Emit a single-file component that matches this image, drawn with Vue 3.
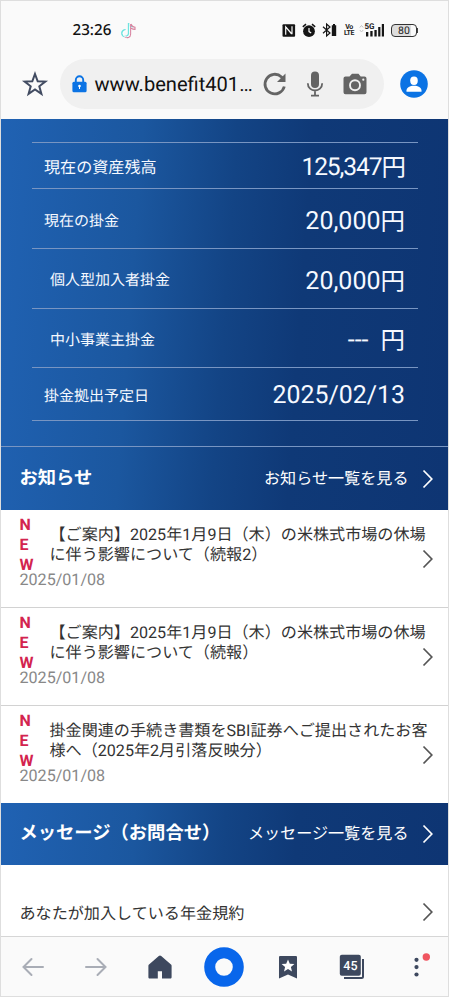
<template>
  <div class="screen">
    <header class="top">
      <div class="status">
        <span class="clock">23:26</span>
        <svg class="tiktok" width="15" height="17" viewBox="0 0 15 17" fill="none" stroke-width="1.5">
          <path d="M7.6 1v10.2a3.4 3.4 0 1 1-3-3.4M7.6 1c.4 2.4 2 3.6 4.2 3.8" stroke="#6fe3df" />
          <path d="M9.6 2v10.2a3.4 3.4 0 0 1-6 2.2M10 2c.6 2 1.8 3 4 3.2v2.2c-1.6 0-2.8-.5-4-1.2" stroke="#d8829f" stroke-width="1.1" />
          <path d="M8.6 2v9.7a3.2 3.2 0 1 1-3-3.2" stroke="#fff" stroke-width=".8" />
        </svg>
        <div class="indicators">
          <svg class="nfc" width="14" height="13" viewBox="0 0 14 13">
            <rect x=".5" y=".3" width="12.6" height="12.4" rx="1" fill="#151515" />
            <path d="M3.7 10.8V2.800l5.800 7M10 2.200v8M4.200 3.300l5.600 6.500" fill="none" stroke="#fafafa" stroke-width="1.2" />
          </svg>
          <svg class="alarm" width="14" height="15" viewBox="0 0 14 15">
            <circle cx="7" cy="8.2" r="5.9" fill="#151515" />
            <path d="M.8 3.8 4 1.2M13.2 3.8 10 1.2" stroke="#151515" stroke-width="1.5" />
            <path d="M7 5v3.6l2.200 1.500" fill="none" stroke="#fafafa" stroke-width="1.2" />
          </svg>
          <svg class="bluetooth" width="15" height="14" viewBox="0 0 15 14">
            <path d="M1 3.8 8 10 4.600 13V1L8 4 1 10.2" fill="none" stroke="#151515" stroke-width="1.2" />
            <path d="M9.800 2.200h1.200V1h2v1.200h1.200V13H9.800z" fill="#151515" />
          </svg>
          <span class="volte"><b>Vo</b><b>LTE</b></span>
          <svg class="signal" width="26" height="16" viewBox="0 0 26 16">
            <path d="M.8 5.500 2.500 3.500l1.700 2M.8 8l1.700 2 1.700-2" fill="none" stroke="#c4c4c4" />
            <text x="5.500" y="7.300" class="five-g">5G</text>
            <path d="M7 10h2.300v4.500H7zM11.300 9h2.300v5.500h-2.300zM15.400 8h2.300v6.500h-2.300zM19.200 5h2.200v9.500h-2.200zM22.800 2h2.200v12.500h-2.200z" fill="#151515" />
          </svg>
          <span class="battery">80</span>
        </div>
      </div>

      <div class="address-row">
        <svg class="star" width="24" height="24" viewBox="0 0 24 24">
          <path d="m12 2 2.700 7.300 7.600.3-6 4.700 2.100 7.500L12 17.500l-6.400 4.300 2.100-7.500-6-4.700 7.600-.3z" fill="none" stroke="#414b61" stroke-width="2" />
        </svg>
        <div class="address">
          <svg class="lock" width="15" height="18" viewBox="0 0 15 18">
            <path d="M3.800 8V5a3.700 3.700 0 0 1 7.400 0v3" fill="none" stroke="#0b73e4" stroke-width="1.9" />
            <rect x=".4" y="6.700" width="14.200" height="10.600" rx="1.500" fill="#0b73e4" />
            <circle cx="7.500" cy="11" r="1.300" fill="#fff" />
            <path d="M7 11.500h1V14H7z" fill="#fff" />
          </svg>
          <span class="url">www.benefit401…</span>
          <svg class="reload" width="26" height="26" viewBox="0 0 26 26">
            <path d="M22.300 15.500A9.800 9.800 0 1 1 19.500 5.900l2.500 2.500" fill="none" stroke="#646464" stroke-width="2.800" />
            <path d="M23.500 2.500V11H15z" fill="#646464" />
          </svg>
          <svg class="mic" width="18" height="26" viewBox="0 0 18 26">
            <rect x="5" y=".6" width="8" height="16.400" rx="4" fill="#646464" />
            <path d="M1.800 12.300c0 9.600 14.400 9.600 14.400 0M9 19.500v5M5 24.700h8" fill="none" stroke="#646464" stroke-width="1.800" />
          </svg>
          <svg class="camera" width="24" height="22" viewBox="0 0 24 22">
            <path d="M2.500 3.500h4L9 .8h6.500l2.200 2.700h3.800a2 2 0 0 1 2 2v13.800a2 2 0 0 1-2 2h-19a2 2 0 0 1-2-2V5.500a2 2 0 0 1 2-2z" fill="#646464" />
            <circle cx="12" cy="12.200" r="5" fill="none" stroke="#f0f0f0" stroke-width="1.900" />
            <circle cx="20.300" cy="6.700" r="1.100" fill="#f0f0f0" />
          </svg>
        </div>
        <svg class="avatar" width="28" height="28" viewBox="0 0 28 28">
          <circle cx="14" cy="14" r="13.800" fill="#0b73e4" />
          <ellipse cx="14" cy="10.800" rx="3.800" ry="4.200" fill="#fff" />
          <path d="M6.500 21.800v-1.300c0-3 3.500-4.800 7.500-4.800s7.500 1.800 7.500 4.800v1.300z" fill="#fff" />
        </svg>
      </div>
    </header>

    <main class="page">
      <section class="summary">
        <dl class="assets">
          <div v-for="row in assets" :key="row.label" :class="['asset', row.kind]">
            <dt>{{ row.label }}</dt>
            <dd><span class="amount">{{ row.value }}</span><span v-if="row.unit" class="unit">{{ row.unit }}</span></dd>
          </div>
        </dl>
        <div class="section-head">
          <h2>お知らせ</h2>
          <a>お知らせ一覧を見る</a>
          <svg class="chevron" width="12" height="20" viewBox="0 0 12 20"><path d="m1.500 1.500 8.300 8.500-8.300 8.500" /></svg>
        </div>
      </section>

      <article v-for="item in news" :key="item.id" class="news">
        <div class="news-main">
          <div class="new-mark">
            <span>N</span>
            <span>E</span>
            <span>W</span>
          </div>
          <p>{{ item.lines[0] }}<br>{{ item.lines[1] }}</p>
          <svg class="chevron" width="12" height="20" viewBox="0 0 12 20"><path d="m1.500 1.500 8.300 8.500-8.300 8.500" /></svg>
        </div>
        <time>2025/01/08</time>
      </article>

      <div class="section-head message">
        <h2>メッセージ（お問合せ）</h2>
        <a>メッセージ一覧を見る</a>
        <svg class="chevron" width="12" height="20" viewBox="0 0 12 20"><path d="m1.500 1.500 8.300 8.500-8.300 8.500" /></svg>
      </div>

      <div class="rules">
        <span>あなたが加入している年金規約</span>
        <svg class="chevron" width="12" height="20" viewBox="0 0 12 20"><path d="m1.500 1.500 8.300 8.500-8.300 8.500" /></svg>
      </div>
    </main>

    <nav class="toolbar">
      <svg width="24" height="20" viewBox="0 0 24 20">
        <path d="M22 10H2.500M10.500 2 2.500 10l8 8" fill="none" stroke="#a9adb6" stroke-width="2" stroke-linecap="round" />
      </svg>
      <svg width="24" height="20" viewBox="0 0 24 20">
        <path d="M2 10h19.500M13.500 2l8 8-8 8" fill="none" stroke="#a9adb6" stroke-width="2" stroke-linecap="round" />
      </svg>
      <svg width="24" height="24" viewBox="0 0 24 24">
        <path d="M10.800 1.100a1.800 1.800 0 0 1 2.400 0l9.800 8.300c.4.400.6.800.6 1.300v11.500c0 .8-.6 1.400-1.400 1.400h-8.200v-7.300H9.800v7.300h-8c-.8 0-1.400-.6-1.400-1.400V10.700c0-.5.2-.9.600-1.300z" fill="#3d485e" />
      </svg>
      <svg width="40" height="40" viewBox="0 0 40 40">
        <circle cx="20" cy="20" r="14.300" fill="none" stroke="#0866eb" stroke-width="11" />
      </svg>
      <svg width="20" height="24" viewBox="0 0 20 24">
        <path d="M1 2.300C1 1.500 1.500 1 2.300 1h15.400c.8 0 1.300.5 1.300 1.300v21.200l-9-4-9 4z" fill="#3d485e" />
        <path d="m10 4.500 1.800 4.200 4.600.3-3.500 3 1.100 4.500-4-2.500-4 2.500 1.100-4.500-3.500-3 4.600-.3z" fill="#fff" />
      </svg>
      <svg width="26" height="26" viewBox="0 0 26 26">
        <path d="M24 5v17.500a1.500 1.500 0 0 1-1.500 1.500H5" fill="none" stroke="#3d485e" stroke-width="2" />
        <rect x=".8" y=".8" width="21" height="21" rx="2" fill="#3d485e" />
        <text x="11.400" y="15.700" class="tab-count">45</text>
      </svg>
      <svg width="24" height="30" viewBox="0 0 24 30">
        <g fill="#3d485e">
          <circle cx="12.500" cy="7.800" r="2.100" />
          <circle cx="12.500" cy="15.100" r="2.100" />
          <circle cx="12.500" cy="22.500" r="2.100" />
        </g>
        <circle cx="22.300" cy="5" r="3.700" fill="#f05560" class="dot" />
      </svg>
    </nav>
  </div>
</template>

<script setup>
const assets = [
  { label: '現在の資産残高', value: '125,347', unit: '円', kind: 'total' },
  { label: '現在の掛金', value: '20,000', unit: '円', kind: 'current' },
  { label: '個人型加入者掛金', value: '20,000', unit: '円', kind: 'sub' },
  { label: '中小事業主掛金', value: '---', unit: '円', kind: 'sub none' },
  { label: '掛金拠出予定日', value: '2025/02/13', unit: '', kind: 'date' },
]

const news = [
  { id: 1, lines: ['【ご案内】2025年1月9日（木）の米株式市場の休場', 'に伴う影響について（続報2）'] },
  { id: 2, lines: ['【ご案内】2025年1月9日（木）の米株式市場の休場', 'に伴う影響について（続報）'] },
  { id: 3, lines: ['掛金関連の手続き書類をSBI証券へご提出されたお客', '様へ（2025年2月引落反映分）'] },
]
</script>

<style>
body {
  background: #fff;
}
</style>

<style scoped>
.screen {
  box-sizing: border-box;
  width: 449px;
  height: 997px;
  overflow: hidden;
  display: flex;
  flex-direction: column;
  border: 1px solid #dedede;
  background: #fff;
  color: #333;
  font-family: Roboto, 'Noto Sans CJK JP', sans-serif;
  text-rendering: geometricPrecision;
}

svg {
  display: block;
  flex: none;
  overflow: visible;
}

.top {
  flex: none;
  height: 118px;
  background: #fafafa;
}

.status {
  height: 58px;
  display: flex;
  align-items: center;
  padding-left: 71.5px;
}

.clock {
  width: 48.5px;
  font-family: 'Noto Sans', sans-serif;
  font-size: 15.2px;
  font-weight: 500;
  line-height: 20px;
  color: #111;
}

.indicators {
  display: flex;
  align-items: center;
  margin-left: 146px;
}

.alarm {
  margin-left: 6px;
}

.bluetooth {
  margin-left: 6px;
}

.volte {
  display: flex;
  flex-direction: column;
  align-items: center;
  width: 10px;
  margin-left: 7px;
  font-size: 7px;
  line-height: 6.5px;
  letter-spacing: -0.5px;
  color: #222;
}

.signal {
  margin-left: 5px;
}

.five-g {
  font-size: 8px;
  font-weight: bold;
  fill: #222;
}

.battery {
  position: relative;
  box-sizing: border-box;
  width: 26px;
  height: 13px;
  margin-left: 6px;
  border: 1px solid #333;
  border-radius: 4px;
  background: linear-gradient(to right, #ddd 80%, #fafafa 80%);
  font-size: 10.5px;
  line-height: 11px;
  text-align: center;
  color: #222;
}

.battery::after {
  content: '';
  position: absolute;
  right: -2px;
  top: 3px;
  width: 1px;
  height: 5px;
  background: #444;
}

.address-row {
  display: flex;
  align-items: center;
  padding-left: 22px;
}

.address {
  box-sizing: border-box;
  display: flex;
  align-items: center;
  width: 324px;
  height: 50px;
  margin-left: 13px;
  padding-left: 12px;
  border-radius: 25px;
  background: #f0f0f0;
}

.url {
  width: 167px;
  margin-left: 7.5px;
  font-size: 20.1px;
  line-height: 26px;
  white-space: nowrap;
  color: #111;
}

.mic {
  margin-left: 18px;
}

.camera {
  margin-left: 19px;
}

.avatar {
  margin-left: 16px;
}

.page {
  flex: 1;
  min-height: 0;
  overflow: hidden;
}

.summary,
.message {
  background: linear-gradient(94deg, #2062b3 0%, #1b579f 30%, #134485 50%, #0f3977 66%, #0e3573 100%);
}

.summary {
  height: 391px;
}

.assets {
  height: 279px;
  margin: 0 30px 0 31px;
  padding-top: 23px;
}

.asset {
  box-sizing: border-box;
  height: 60px;
  display: flex;
  align-items: center;
  justify-content: space-between;
  padding: 4px 13px 0 12px;
  border-bottom: 1px solid #7895c2;
  color: #f6f9ff;
}

.asset dt {
  font-size: 15px;
  line-height: 20px;
}

.asset dd {
  display: flex;
  align-items: center;
  margin: 3px 0 0;
  font-size: 25px;
  line-height: 30px;
}

.unit {
  font-size: 24.5px;
}

.total {
  height: 47px;
  border-top: 1px solid #7895c2;
}

.total dt {
  font-size: 16.1px;
}

.total .amount {
  font-size: 24.6px;
  letter-spacing: -1.1px;
}

.total dd {
  margin: 1px -1px 0 0;
}

.sub {
  height: 59.5px;
  padding-left: 18px;
}

.none .amount {
  margin-right: 12px;
}

.date {
  height: 53px;
}

.date dd {
  margin-top: 0;
  font-size: 24.9px;
}

.section-head {
  box-sizing: border-box;
  display: flex;
  align-items: center;
  height: 64px;
  padding: 0 14.5px 0 18.5px;
  border-top: 1px solid #7895c2;
  color: #fff;
}

.summary .section-head {
  margin-top: 25px;
}

.section-head h2 {
  flex: 1;
  margin: 0;
  font-size: 18.3px;
  line-height: 24px;
}

.section-head a {
  font-size: 16.1px;
  line-height: 22px;
}

.section-head .chevron {
  margin-left: 13px;
  stroke: #fff;
}

.chevron {
  fill: none;
  stroke: #555;
  stroke-width: 1.7;
}

.news {
  box-sizing: border-box;
  height: 98px;
  padding: 8px 14.5px 0 18.5px;
  border-bottom: 1px solid #d2d2d2;
}

.news:nth-of-type(3) {
  height: 97px;
  border-bottom: 0;
}

.news-main {
  display: flex;
  align-items: flex-start;
  height: 55px;
}

.new-mark {
  flex: none;
  display: flex;
  flex-direction: column;
  gap: 6.2px;
  width: 30px;
  font-size: 16px;
  font-weight: 700;
  line-height: 14px;
  color: #d3244f;
}

.news p {
  flex: 1;
  min-width: 0;
  margin: 7px 0 0;
  font-size: 16.1px;
  line-height: 20.4px;
  white-space: nowrap;
}

.news .chevron {
  margin-top: 31px;
}

.news time {
  display: block;
  font-size: 16.1px;
  line-height: 14px;
  color: #888;
}

.message {
  height: 62px;
  border-top: 0;
}

.rules {
  display: flex;
  align-items: center;
  justify-content: space-between;
  height: 94px;
  padding: 0 14.5px 0 18.5px;
  font-size: 16.1px;
}

.toolbar {
  box-sizing: border-box;
  flex: none;
  display: grid;
  grid-template-columns: 63px repeat(6, 64px);
  align-items: center;
  justify-items: center;
  height: 60px;
  border-top: 1px solid #d6d6d6;
  background: #fafafa;
}

.tab-count {
  font-size: 12.5px;
  font-weight: 500;
  text-anchor: middle;
  fill: #fff;
}
</style>
